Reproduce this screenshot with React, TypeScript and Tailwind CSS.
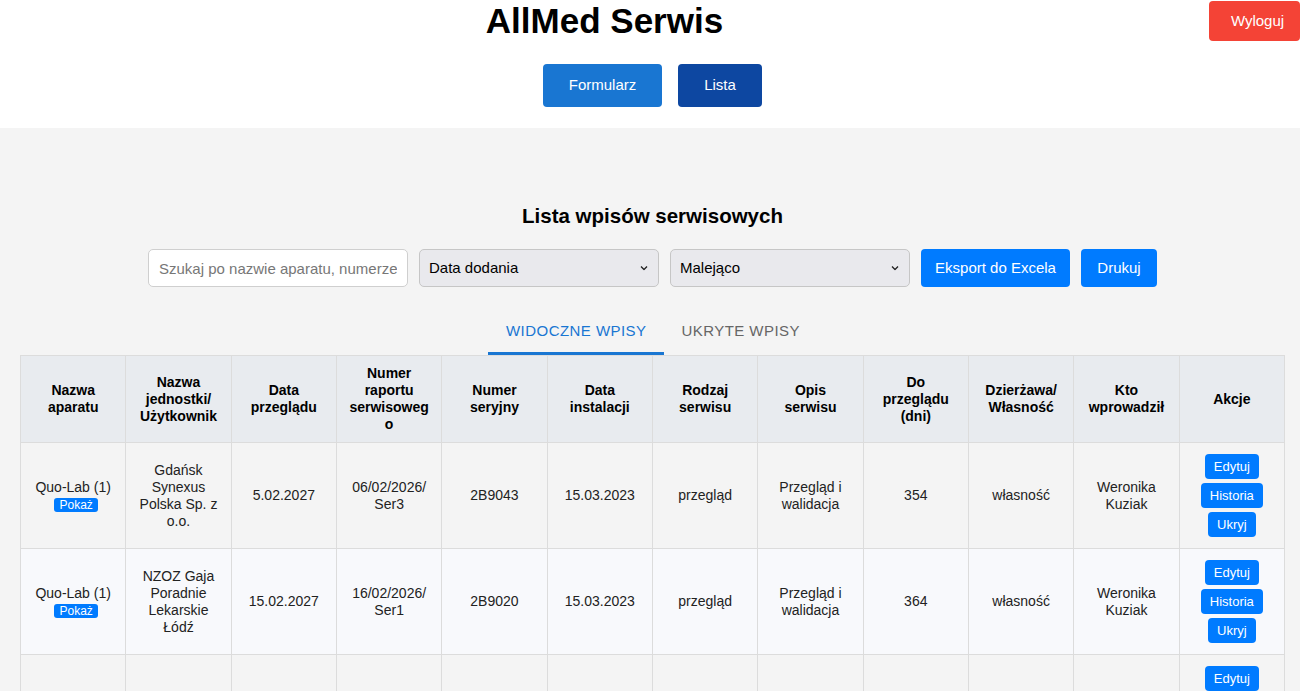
import React from 'react';

type Row = {
  device: string;
  unit: string;
  reviewDate: string;
  report: string;
  serial: string;
  installDate: string;
  kind: string;
  desc: string;
  days: string;
  ownership: string;
  author: string;
};

const headers = [
  'Nazwa aparatu',
  'Nazwa jednostki/ Użytkownik',
  'Data przeglądu',
  'Numer raportu serwisowego',
  'Numer seryjny',
  'Data instalacji',
  'Rodzaj serwisu',
  'Opis serwisu',
  'Do przeglądu (dni)',
  'Dzierżawa/ Własność',
  'Kto wprowadził',
  'Akcje',
];

const rows: Row[] = [
  {
    device: 'Quo-Lab (1)',
    unit: 'Gdańsk Synexus Polska Sp. z o.o.',
    reviewDate: '5.02.2027',
    report: '06/02/2026/ Ser3',
    serial: '2B9043',
    installDate: '15.03.2023',
    kind: 'przegląd',
    desc: 'Przegląd i walidacja',
    days: '354',
    ownership: 'własność',
    author: 'Weronika Kuziak',
  },
  {
    device: 'Quo-Lab (1)',
    unit: 'NZOZ Gaja Poradnie Lekarskie Łódź',
    reviewDate: '15.02.2027',
    report: '16/02/2026/ Ser1',
    serial: '2B9020',
    installDate: '15.03.2023',
    kind: 'przegląd',
    desc: 'Przegląd i walidacja',
    days: '364',
    ownership: 'własność',
    author: 'Weronika Kuziak',
  },
  {
    device: 'Afinion',
    unit: 'Medicus',
    reviewDate: '10.01.2027',
    report: '11/01/2026',
    serial: '2B9011',
    installDate: '20.04.2022',
    kind: 'przegląd',
    desc: 'Przegląd',
    days: '328',
    ownership: 'dzierżawa',
    author: 'Weronika',
  },
];

function ActionButton({ label }: { label: string }) {
  return (
    <button className="h-[25px] px-[9px] rounded-[4px] bg-[#007bff] text-white text-[13px] leading-[25px]">
      {label}
    </button>
  );
}

function Chevron() {
  return (
    <svg
      className="pointer-events-none absolute right-[11px] top-1/2 -translate-y-1/2"
      width="8"
      height="5"
      viewBox="0 0 8 5"
      fill="none"
    >
      <path d="M1 1L4 4L7 1" stroke="#222" strokeWidth="1.3" />
    </svg>
  );
}

export default function App() {
  return (
    <div className="min-h-screen bg-[#f4f4f4] font-['Liberation_Sans',Arial,sans-serif] text-[#222] overflow-x-hidden">
      {/* Header */}
      <header className="bg-white h-[128px]">
        <div className="flex items-start">
          <h1 className="flex-1 text-center text-[35px] font-bold leading-[42px] text-black">AllMed Serwis</h1>
          <button className="w-[91px] h-[40px] mt-[1px] pl-[6px] rounded-[4px] bg-[#f44336] text-white text-[15px]">
            Wyloguj
          </button>
        </div>
        <nav className="flex justify-center gap-[16px] mt-[22px] pl-[5px]">
          <button className="w-[119px] h-[43px] rounded-[4px] bg-[#1976d2] text-white text-[15px]">Formularz</button>
          <button className="w-[84px] h-[43px] rounded-[4px] bg-[#0d47a1] text-white text-[15px]">Lista</button>
        </nav>
      </header>

      {/* Content */}
      <main className="ml-[20px] w-[1265px] pt-[76px]">
        <h2 className="text-center text-[20.5px] font-bold leading-[24px] text-black">Lista wpisów serwisowych</h2>

        <div className="flex justify-center gap-[11px] mt-[21px]">
          <input
            className="w-[260px] h-[38px] px-[10px] rounded-[5px] border border-[#cfcfcf] bg-white text-[15px] placeholder:text-[#777] outline-none"
            placeholder="Szukaj po nazwie aparatu, numerze seryjnym..."
          />
          <div className="relative">
            <select className="appearance-none w-[240px] h-[38px] pl-[9px] rounded-[5px] border border-[#c6c6c6] bg-[#e9e9ed] text-[15px] text-black outline-none">
              <option>Data dodania</option>
            </select>
            <Chevron />
          </div>
          <div className="relative">
            <select className="appearance-none w-[240px] h-[38px] pl-[9px] rounded-[5px] border border-[#c6c6c6] bg-[#e9e9ed] text-[15px] text-black outline-none">
              <option>Malejąco</option>
            </select>
            <Chevron />
          </div>
          <button className="w-[149px] h-[38px] rounded-[4px] bg-[#007bff] text-white text-[15px]">Eksport do Excela</button>
          <button className="w-[76px] h-[38px] rounded-[4px] bg-[#007bff] text-white text-[15px]">Drukuj</button>
        </div>

        {/* Tabs */}
        <div className="flex justify-center mt-[20px]">
          <div className="h-[48px] px-[18px] flex items-center border-b-[3px] border-[#1976d2] text-[#1976d2] text-[15px] tracking-[0.45px] uppercase pt-[3px]">
            Widoczne wpisy
          </div>
          <div className="h-[48px] px-[17px] flex items-center border-b-[3px] border-transparent text-[#666] text-[15px] tracking-[0.45px] uppercase pt-[3px]">
            Ukryte wpisy
          </div>
        </div>

        {/* Table */}
        <table className="w-full table-fixed border-collapse text-[14px] leading-[17px]">
          <thead>
            <tr className="bg-[#e8ebef]">
              {headers.map((h) => (
                <th
                  key={h}
                  className="border border-[#dcdcdc] px-[12px] py-[9px] font-bold text-black text-center align-middle [overflow-wrap:anywhere]"
                >
                  {h}
                </th>
              ))}
            </tr>
          </thead>
          <tbody>
            {rows.map((r, i) => (
              <tr key={i} className={i % 2 === 0 ? 'bg-[#f4f4f4]' : 'bg-[#f8f9fc]'}>
                <td className="border border-[#dcdcdc] px-[12px] py-[11px] text-center align-middle">
                  <div>{r.device}</div>
                  <span className="inline-block ml-[6px] px-[5px] rounded-[3px] bg-[#007bff] text-white text-[12px] leading-[14px]">
                    Pokaż
                  </span>
                </td>
                {[r.unit, r.reviewDate, r.report, r.serial, r.installDate, r.kind, r.desc, r.days, r.ownership, r.author].map(
                  (v, j) => (
                    <td
                      key={j}
                      className="border border-[#dcdcdc] px-[12px] py-[11px] text-center align-middle [overflow-wrap:anywhere]"
                    >
                      {v}
                    </td>
                  )
                )}
                <td className="border border-[#dcdcdc] px-[8px] py-[11px] text-center align-middle">
                  <div className="flex flex-col items-center gap-[4px]">
                    <ActionButton label="Edytuj" />
                    <ActionButton label="Historia" />
                    <ActionButton label="Ukryj" />
                  </div>
                </td>
              </tr>
            ))}
          </tbody>
        </table>
      </main>
    </div>
  );
}
